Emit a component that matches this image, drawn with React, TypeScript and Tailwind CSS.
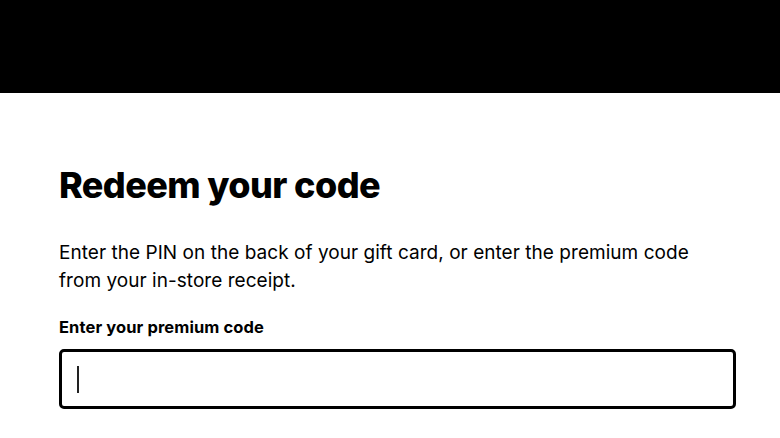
import React from "react";

export default function App() {
  return (
    <div className="min-h-screen w-full bg-white" style={{ fontFamily: "Inter, 'Noto Sans', sans-serif" }}>
      <div className="h-[93px] w-full bg-black" />
      <main className="flex flex-col pl-[59px] pr-[44px] pt-[72px]">
        <h1 className="text-[36px] leading-[40px] font-extrabold tracking-[-0.6px] text-black">Redeem your code</h1>
        <p className="mt-[34px] text-[19px] leading-[28px] tracking-[0.04px] text-black">
          Enter the PIN on the back of your gift card, or enter the premium code
          <br />
          from your in-store receipt.
        </p>
        <label className="mt-[20px] text-[16.5px] leading-[24px] font-bold tracking-[0.1px] text-black">Enter your premium code</label>
        <div className="mt-[10px] flex h-[60px] w-[677px] items-center rounded-[5px] border-[3px] border-black px-[15px]">
          <div className="h-[27px] w-[2px] bg-[#222]" />
        </div>
      </main>
    </div>
  );
}
